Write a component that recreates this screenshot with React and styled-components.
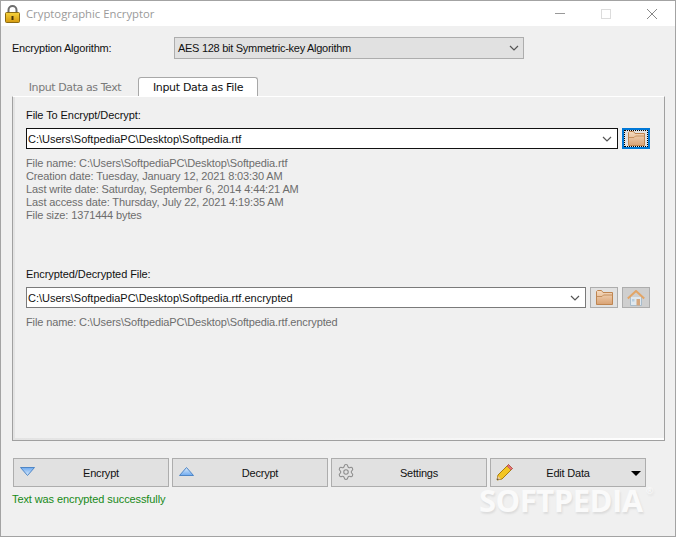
import React from 'react';
import styled, { createGlobalStyle } from 'styled-components';
import { Settings as GearIcon } from 'lucide-react';

const GlobalStyle = createGlobalStyle`
  html, body {
    margin: 0;
    padding: 0;
    background: #f0f0f0;
  }
  * {
    box-sizing: border-box;
  }
`;

const Window = styled.div`
  position: relative;
  width: 676px;
  height: 537px;
  display: flex;
  flex-direction: column;
  background: #f0f0f0;
  border: 1px solid #a3a3a3;
  font-family: 'Liberation Sans', Arial, sans-serif;
  font-size: 11px;
  color: #111;
  overflow: hidden;
`;

const TitleBar = styled.div`
  height: 25px;
  flex: none;
  display: flex;
  align-items: center;
  background: #fff;
  padding-left: 4px;
`;

const TitleText = styled.div`
  margin-left: 6px;
  flex: 1;
  font-family: 'Open Sans', sans-serif;
  font-size: 11.3px;
  color: #9a9a9a;
`;

const WinButton = styled.div`
  width: 46px;
  height: 25px;
  display: flex;
  align-items: center;
  justify-content: center;
`;

const Body = styled.div`
  flex: 1;
  display: flex;
  flex-direction: column;
  padding: 11px 10px 0 11px;
`;

const AlgoRow = styled.div`
  display: flex;
  align-items: center;
  height: 22px;
`;

const AlgoLabel = styled.div`
  width: 162px;
  letter-spacing: -0.22px;
`;

const AlgoSelect = styled.div`
  width: 350px;
  height: 22px;
  display: flex;
  align-items: center;
  justify-content: space-between;
  padding: 0 4px 0 3px;
  letter-spacing: -0.28px;
  background: #e1e1e1;
  border: 1px solid #adadad;
`;

const TabStrip = styled.div`
  display: flex;
  margin-top: 18px;
  height: 19px;
  padding-left: 2px;
  align-items: flex-end;
`;

const Tab = styled.div`
  font-family: 'DejaVu Sans', sans-serif;
  font-size: 11px;
  letter-spacing: ${p => (p.$active ? '-0.33px' : '-0.42px')};
  display: flex;
  align-items: center;
  justify-content: center;
  height: ${p => (p.$active ? '19px' : '17px')};
  width: ${p => (p.$active ? '120px' : '124px')};
  padding-right: ${p => (p.$active ? '0' : '2px')};
  color: ${p => (p.$active ? '#111' : '#7a7a7a')};
  background: ${p => (p.$active ? '#fff' : 'transparent')};
  border: ${p => (p.$active ? '1px solid #a8a8a8' : 'none')};
  border-bottom: none;
  border-radius: 3px 3px 0 0;
`;

const Panel = styled.div`
  height: 345px;
  display: flex;
  flex-direction: column;
  border: 1px solid #a0a0a0;
  border-top: 1px solid #fff;
  background:
    linear-gradient(to right, #e3e3e3, #fff) bottom / 100% 2px no-repeat,
    linear-gradient(#e3e3e3, #e3e3e3) left / 2px 100% no-repeat,
    #f0f0f0;
  padding: 11px 14px 0 13px;
`;

const FieldLabel = styled.div`
  height: 14px;
  line-height: 14px;
  margin-bottom: 6px;
  letter-spacing: -0.08px;
`;

const FieldRow = styled.div`
  display: flex;
  align-items: stretch;
  gap: 4px;
  height: 21px;
`;

const PathBox = styled.div`
  flex: 1;
  display: flex;
  align-items: center;
  justify-content: space-between;
  padding: 0 5px 0 1px;
  background: #fff;
  border: 1px solid ${p => (p.$focused ? '#111' : '#7a7a7a')};
`;

const FolderButton = styled.div`
  width: 28px;
  height: 21px;
  flex: none;
  display: flex;
  align-items: center;
  justify-content: center;
  background: ${p => (p.$dim ? '#cfcfcf' : '#e1e1e1')};
  border: 1px solid #adadad;
`;

const FocusedButton = styled(FolderButton)`
  border: 2px solid #0078d7;
  outline: 1px dotted #000;
  outline-offset: -3px;
`;

const Info = styled.div`
  color: #6d6d6d;
  line-height: 13px;
  letter-spacing: -0.12px;
  margin-top: ${p => p.$top}px;
  height: ${p => p.$height}px;
`;

const ButtonBar = styled.div`
  display: flex;
  gap: 3px;
  margin-top: 17px;
  padding-left: 1px;
`;

const ActionButton = styled.div`
  position: relative;
  width: 156px;
  height: 29px;
  display: flex;
  align-items: center;
  justify-content: center;
  padding-left: ${p => p.$inset || 0}px;
  letter-spacing: -0.22px;
  background: #e1e1e1;
  border: 1px solid #adadad;
`;

const ButtonIcon = styled.span`
  position: absolute;
  left: ${p => p.$left}px;
  top: ${p => p.$top}px;
  display: flex;
`;

const DropArrow = styled.span`
  position: absolute;
  right: 4px;
  top: 12px;
  width: 0;
  height: 0;
  border-left: 5px solid transparent;
  border-right: 5px solid transparent;
  border-top: 5px solid #000;
`;

const Status = styled.div`
  margin-top: 5px;
  color: #178a17;
  line-height: 14px;
  letter-spacing: -0.1px;
`;

const Watermark = styled.div`
  position: absolute;
  left: 478px;
  top: 478px;
  font-family: 'Open Sans', sans-serif;
  font-weight: 700;
  font-size: 31px;
  letter-spacing: -0.5px;
  color: #fafafa;
  text-shadow: 1px 2px 2px #dcdcdc;
  white-space: nowrap;
`;

const WatermarkMark = styled.span`
  position: absolute;
  left: 167px;
  top: 5px;
  font-size: 9px;
  font-weight: 400;
`;

const Chevron = ({ color = '#555' }) => (
  <svg width="10" height="6" viewBox="0 0 10 6">
    <path d="M1 1l4 4 4-4" fill="none" stroke={color} strokeWidth="1.2" />
  </svg>
);

const LockIcon = () => (
  <svg width="15" height="18" viewBox="0 0 15 18">
    <defs>
      <linearGradient id="lockBody" x1="0" y1="0" x2="0" y2="1">
        <stop offset="0" stopColor="#f6d33c" />
        <stop offset="1" stopColor="#d69a10" />
      </linearGradient>
    </defs>
    <path d="M3.500 8V5a4 4 0 0 1 8 0v3" fill="none" stroke="#6e6e6e" strokeWidth="2" />
    <rect x=".5" y="7.500" width="14" height="10" rx="1" fill="url(#lockBody)" stroke="#8a6a12" />
    <rect x="6.500" y="11" width="2" height="4" fill="#4a3608" />
  </svg>
);

const FolderIcon = ({ id }) => (
  <svg width="17" height="15" viewBox="0 0 17 15">
    <defs>
      <linearGradient id={id} x1="0" y1="0" x2="0" y2="1">
        <stop offset="0" stopColor="#f6dcc0" />
        <stop offset="1" stopColor="#d9a274" />
      </linearGradient>
    </defs>
    <path d="M.5 14.500V1.500l1-1h4l1.500 2h9.500v12z" fill={`url(#${id})`} stroke="#bf8550" />
    <path d="M1 6.500h5l1.500-1.500h9" fill="none" stroke="#c48f5e" />
  </svg>
);

const HomeIcon = () => (
  <svg width="18" height="16" viewBox="0 0 18 16">
    <path d="M3.500 7v8.500h11V7" fill="#dfe8ef" stroke="#a9bccb" />
    <path d="M.8 8.500L9 1l8.200 7.500" fill="none" stroke="#e3a566" strokeWidth="2" />
    <rect x="9.500" y="9" width="3.500" height="6.500" fill="#d5a67c" />
    <rect x="5" y="9" width="2.500" height="2.500" fill="#b6cde0" />
  </svg>
);

const TriangleIcon = ({ up }) => (
  <svg width="15" height="9" viewBox="0 0 15 9">
    <defs>
      <linearGradient id={up ? 'triUp' : 'triDown'} x1="0" y1="0" x2="0" y2="1">
        <stop offset="0" stopColor={up ? '#dcebfa' : '#6eaaf0'} />
        <stop offset="1" stopColor={up ? '#6eaaf0' : '#dcebfa'} />
      </linearGradient>
    </defs>
    <path
      d={up ? 'M.5 8.500L7.500.5l7 8z' : 'M.5.5h14l-7 8z'}
      fill={`url(#${up ? 'triUp' : 'triDown'})`}
      stroke="#4f86c6"
    />
  </svg>
);

const PencilIcon = () => (
  <svg width="18" height="18" viewBox="0 0 18 18">
    <path d="M1 17l1-5L12.500 1.500l4 4L6 16z" fill="#f3c623" stroke="#a87c10" />
    <path d="M12.500 1.500l4 4-1.500 1.500-4-4z" fill="#e4717a" stroke="#b04a52" strokeWidth=".6" />
    <path d="M1 17l1-4 3 3z" fill="#e8c9a0" />
    <path d="M1 17l.5-1.800 1.300 1.300z" fill="#333" />
  </svg>
);

export default function App() {
  return (
    <>
      <GlobalStyle />
      <Window>
        <TitleBar>
          <LockIcon />
          <TitleText>Cryptographic Encryptor</TitleText>
          <WinButton>
            <svg width="10" height="1"><rect width="10" height="1" fill="#999" /></svg>
          </WinButton>
          <WinButton>
            <svg width="10" height="10"><rect x=".5" y=".5" width="9" height="9" fill="none" stroke="#dcdcdc" /></svg>
          </WinButton>
          <WinButton>
            <svg width="10" height="10"><path d="M0 0l10 10M10 0L0 10" stroke="#888" /></svg>
          </WinButton>
        </TitleBar>
        <Body>
          <AlgoRow>
            <AlgoLabel>Encryption Algorithm:</AlgoLabel>
            <AlgoSelect>
              AES 128 bit Symmetric-key Algorithm
              <Chevron />
            </AlgoSelect>
          </AlgoRow>
          <TabStrip>
            <Tab>Input Data as Text</Tab>
            <Tab $active>Input Data as File</Tab>
          </TabStrip>
          <Panel>
            <FieldLabel>File To Encrypt/Decrypt:</FieldLabel>
            <FieldRow>
              <PathBox $focused>
                C:\Users\SoftpediaPC\Desktop\Softpedia.rtf
                <Chevron />
              </PathBox>
              <FocusedButton><FolderIcon id="folderA" /></FocusedButton>
            </FieldRow>
            <Info $top={8} $height={110}>
              File name: C:\Users\SoftpediaPC\Desktop\Softpedia.rtf<br />
              Creation date: Tuesday, January 12, 2021 8:03:30 AM<br />
              Last write date: Saturday, September 6, 2014 4:44:21 AM<br />
              Last access date: Thursday, July 22, 2021 4:19:35 AM<br />
              File size: 1371444 bytes
            </Info>
            <FieldLabel>Encrypted/Decrypted File:</FieldLabel>
            <FieldRow>
              <PathBox>
                C:\Users\SoftpediaPC\Desktop\Softpedia.rtf.encrypted
                <Chevron />
              </PathBox>
              <FolderButton><FolderIcon id="folderB" /></FolderButton>
              <FolderButton $dim><HomeIcon /></FolderButton>
            </FieldRow>
            <Info $top={8} $height={14}>
              File name: C:\Users\SoftpediaPC\Desktop\Softpedia.rtf.encrypted
            </Info>
          </Panel>
          <ButtonBar>
            <ActionButton $inset={20}>
              <ButtonIcon $left={6} $top={8}><TriangleIcon /></ButtonIcon>
              Encrypt
            </ActionButton>
            <ActionButton $inset={20}>
              <ButtonIcon $left={6} $top={8}><TriangleIcon up /></ButtonIcon>
              Decrypt
            </ActionButton>
            <ActionButton $inset={20}>
              <ButtonIcon $left={5} $top={4}><GearIcon size={18} color="#8c8c8c" strokeWidth={1.4} /></ButtonIcon>
              Settings
            </ActionButton>
            <ActionButton>
              <ButtonIcon $left={5} $top={4}><PencilIcon /></ButtonIcon>
              Edit Data
              <DropArrow />
            </ActionButton>
          </ButtonBar>
          <Status>Text was encrypted successfully</Status>
        </Body>
        <Watermark>
          SOFTPEDIA
          <WatermarkMark>®</WatermarkMark>
        </Watermark>
      </Window>
    </>
  );
}
